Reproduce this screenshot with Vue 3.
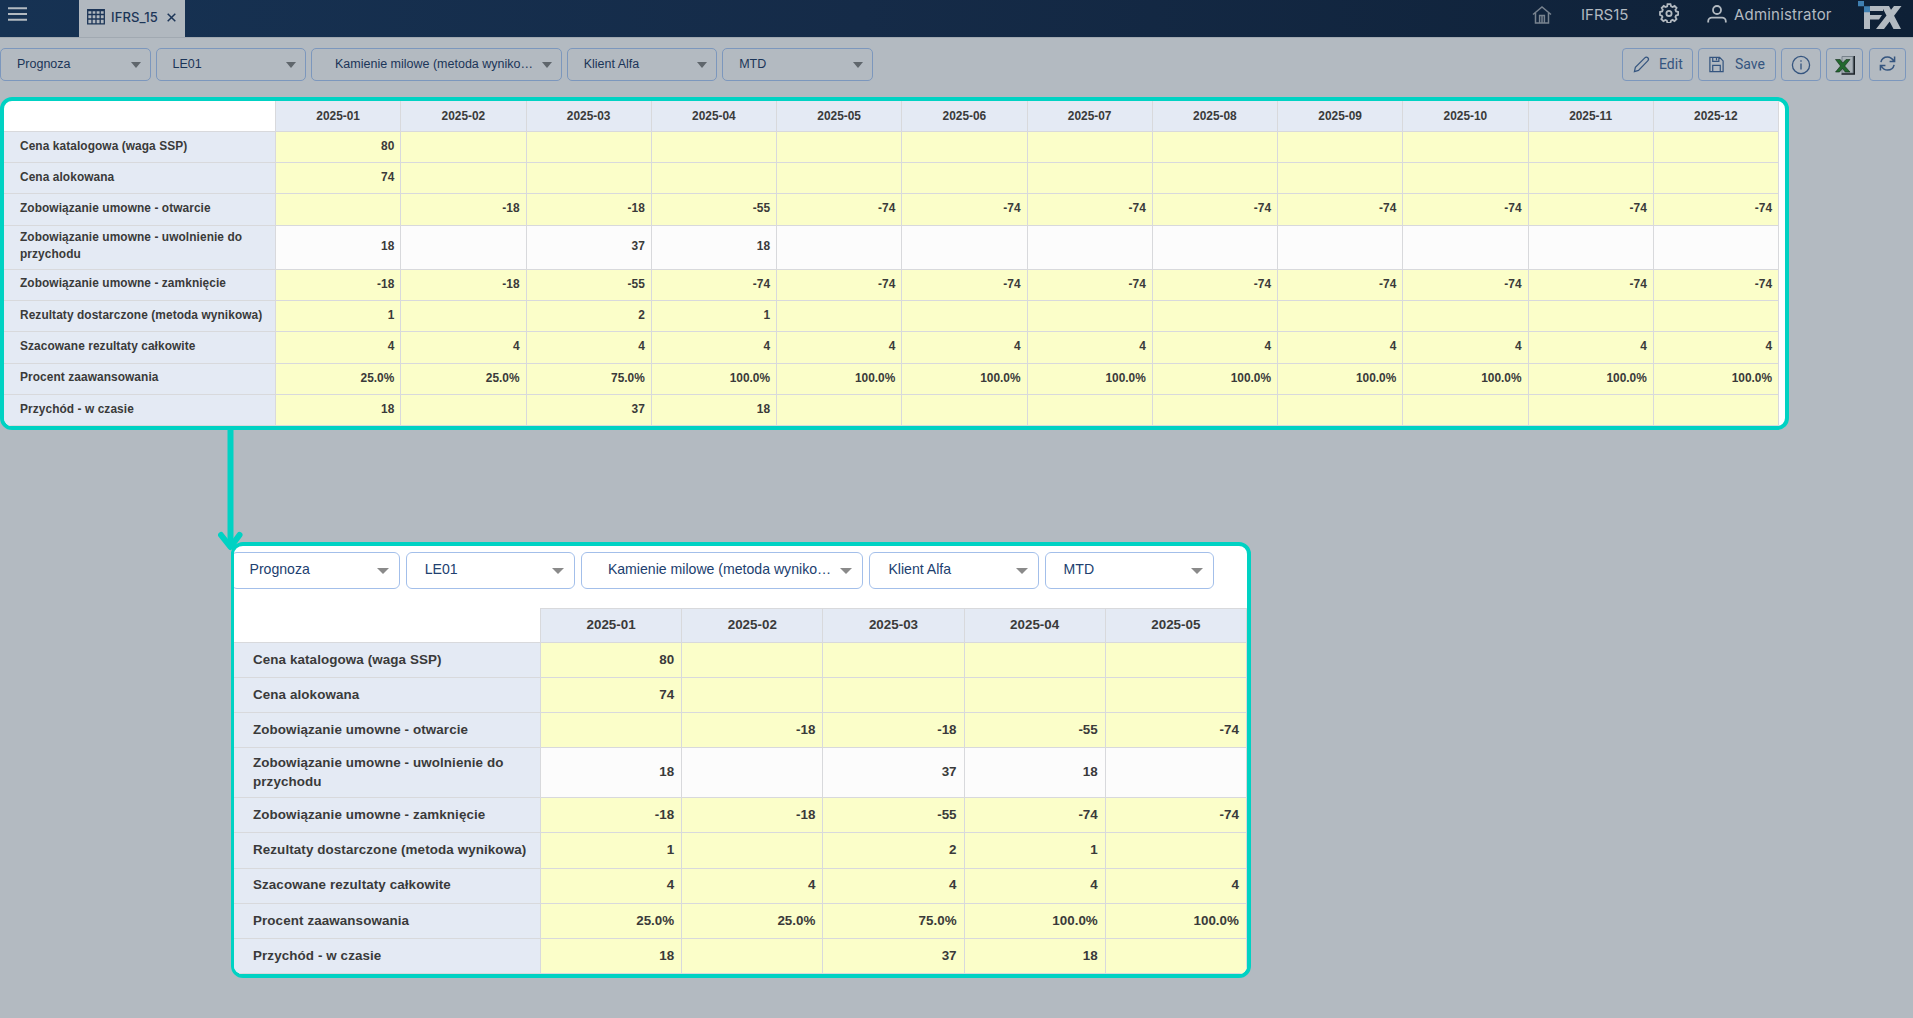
<script setup>
const months = Array.from({ length: 12 }, (_, i) => `2025-${String(i + 1).padStart(2, '0')}`)

const fill = (head, rest) => [...head, ...Array(12 - head.length).fill(rest)]

const rows = [
  { label: 'Cena katalogowa (waga SSP)', values: fill(['80'], '') },
  { label: 'Cena alokowana', values: fill(['74'], '') },
  { label: 'Zobowiązanie umowne - otwarcie', values: fill(['', '-18', '-18', '-55'], '-74') },
  { label: 'Zobowiązanie umowne - uwolnienie do przychodu', values: fill(['18', '', '37', '18'], ''), input: true },
  { label: 'Zobowiązanie umowne - zamknięcie', values: fill(['-18', '-18', '-55'], '-74') },
  { label: 'Rezultaty dostarczone (metoda wynikowa)', values: fill(['1', '', '2', '1'], '') },
  { label: 'Szacowane rezultaty całkowite', values: fill([], '4') },
  { label: 'Procent zaawansowania', values: fill(['25.0%', '25.0%', '75.0%'], '100.0%') },
  { label: 'Przychód - w czasie', values: fill(['18', '', '37', '18'], '') }
]

const filters = [
  { text: 'Prognoza' },
  { text: 'LE01' },
  { text: 'Kamienie milowe (metoda wyniko…', wide: true },
  { text: 'Klient Alfa' },
  { text: 'MTD' }
]

const tables = [
  { name: 'full', months },
  { name: 'zoomed', months: months.slice(0, 5), filters }
]
</script>

<template>
  <div class="page">
    <header class="topbar">
      <svg class="burger" viewBox="0 0 19 14"><path d="M0 1.2h19M0 7h19M0 12.8h19" /></svg>
      <div class="tab">
        <svg class="tab-grid" viewBox="0 0 18 16">
          <path d="M.7 .7h16.6v14.2H.7zM.7 1.5h16.6M.7 5.5h16.6M.7 10h16.6M5 .7v14.2M9 .7v14.2M13.2 .7v14.2" />
        </svg>
        <span class="tab-name">IFRS_15</span>
        <svg class="tab-close" viewBox="0 0 9 9"><path d="M.7 .7l7.6 7.6M8.3 .7L.7 8.3" /></svg>
      </div>
      <div class="account">
        <svg class="home" viewBox="0 0 20 18">
          <path d="M1 8.5L10 1l9 7.5M3.5 7v10h13V7M7.6 17V9.5h4.8V17M10 10v7" />
        </svg>
        <span class="module">IFRS15</span>
        <svg class="gear" viewBox="0 0 20 20">
          <path d="M8.5 1.2h3l.6 2.2 1.5.7 2-1.2 2 2-1.2 2 .7 1.5 2.1.6v2.9l-2.2.7-.6 1.4 1.1 2-2 2.1-2-1.2-1.4.7-.7 2.2h-3l-.6-2.2-1.4-.6-2 1.1-2.1-2.1 1.2-2-.7-1.4L1 11.9V9l2.2-.6.6-1.5-1.1-2 2-2 2 1.2 1.5-.7z" />
          <circle cx="10" cy="10.4" r="2.6" />
        </svg>
        <svg class="user" viewBox="0 0 20 18">
          <circle cx="10" cy="5" r="4" />
          <path d="M1.2 17.5v-1.2c0-2 1.6-3.7 3.7-3.7h10.2c2 0 3.7 1.7 3.7 3.7v1.2" />
        </svg>
        <span class="user-name">Administrator</span>
        <svg class="logo" viewBox="0 0 44 30">
          <path class="logo-letter" d="M12 6h13v5H12v4h12l-3 4.5h-9V29H6V12h6z" />
          <path class="logo-letter" d="M23.5 6H31l12 23h-7.5zM36 6h7.5L26 29h-8z" />
          <path class="logo-square" d="M0 1h6v5.2H0zM6 6.2h6v6H6z" />
        </svg>
      </div>
    </header>

    <div class="toolbar">
      <div class="filters">
        <div v-for="f in filters" :key="f.text" class="select" :class="{ wide: f.wide }">
          <span>{{ f.text }}</span><i class="caret"></i>
        </div>
      </div>
      <div class="actions">
        <button class="btn edit">
          <svg viewBox="0 0 18 18"><path d="M1.5 16.5l1-4.5L12.5 2c1-1 2.3-1 3.2-.1s.9 2.2-.1 3.2L5.8 15.3z" /></svg>
          <span>Edit</span>
        </button>
        <button class="btn save">
          <svg viewBox="0 0 18 18"><path d="M2 1.5h10.3l3.7 3.7v11.3H2zM5 1.5v4.3h6.5V1.5M9 2v2.5M5 16.5V10h8v6.5" /></svg>
          <span>Save</span>
        </button>
        <button class="btn info">
          <svg viewBox="0 0 20 20"><circle cx="10" cy="10" r="8.6" /><path d="M10 8.5v6M10 5.3v1.5" /></svg>
        </button>
        <button class="btn excel">
          <svg viewBox="0 0 20 20">
            <path class="sheet" d="M7 1.5h11v16.5H7z" />
            <path class="sheet-edge" d="M6.5 19h12.7V1" />
            <path class="x-mark" d="M.5 4.5h4.7L7.7 8 11 4.5h4L9.700 11l5.300 6h-4.800l-2.700-3.500-3 3.500h-4l5-6z" />
          </svg>
        </button>
        <button class="btn refresh">
          <svg viewBox="0 0 18 18">
            <path d="M2 7.5C2.8 4 5.6 2 9 2c3 0 5 1.5 6.8 4.5M16.5 1.5v5.3h-5.3M16 10.5C15.2 14 12.4 16 9 16c-3 0-5-1.5-6.8-4.5M1.5 16.5v-5.3h5.3" />
          </svg>
        </button>
      </div>
    </div>

    <section v-for="t in tables" :key="t.name" class="panel" :class="t.name">
      <div v-if="t.filters" class="filters">
        <div v-for="f in t.filters" :key="f.text" class="select" :class="{ wide: f.wide }">
          <span>{{ f.text }}</span><i class="caret"></i>
        </div>
      </div>
      <div class="grid">
        <div class="corner"></div>
        <div v-for="m in t.months" :key="m" class="month">{{ m }}</div>
        <template v-for="r in rows" :key="r.label">
          <div class="label"><span>{{ r.label }}</span></div>
          <div v-for="(m, i) in t.months" :key="m" class="cell" :class="{ input: r.input }">{{ r.values[i] }}</div>
        </template>
      </div>
    </section>

    <!-- arrow from the full table to its enlarged fragment -->
    <svg class="arrow" viewBox="0 0 26 122">
      <path class="shaft" d="M12.5 0v116" />
      <path class="head" d="M3 106l9.5 12 9-12" />
    </svg>
  </div>
</template>

<style>
body {
  margin: 0;
  background: #b3bac1;
}
</style>

<style scoped>
.page {
  position: relative;
  width: 1913px;
  height: 1018px;
  overflow: hidden;
  background: #b3bac1;
  font-family: 'Liberation Sans', Arial, sans-serif;
}

.page * {
  box-sizing: border-box;
}

svg {
  display: block;
  flex: none;
  fill: none;
  stroke: currentColor;
}

/* top bar */
.topbar {
  display: flex;
  height: 37px;
  background: linear-gradient(90deg, #163253 0%, #152b48 45%, #0e2036 100%);
  color: #b3bac1;
  font-family: Inter, sans-serif;
}

.burger {
  width: 19px;
  height: 14px;
  margin: 7px 52px 0 8px;
  stroke-width: 2;
}

.tab {
  display: flex;
  width: 106px;
  padding-left: 8px;
  background: #b1b8bf;
  color: #1c3557;
}

.tab-grid {
  width: 18px;
  height: 16px;
  margin-top: 9px;
  stroke-width: 1.3;
}

.tab-name {
  width: 62px;
  padding-left: 6px;
  font: 500 13px/35px Inter, sans-serif;
  letter-spacing: 0.1px;
}

.tab-close {
  width: 9px;
  height: 9px;
  margin-top: 13px;
  stroke-width: 1.5;
}

.account {
  display: flex;
  margin-left: auto;
}

.home {
  width: 20px;
  height: 18px;
  margin: 6px 29px 0 0;
  color: #78838f;
  stroke-width: 1.5;
}

.module {
  width: 78px;
  font-size: 15px;
  line-height: 30px;
}

.gear {
  width: 20px;
  height: 20px;
  margin: 3px 28px 0 0;
  stroke-width: 1.8;
}

.user {
  width: 20px;
  height: 18px;
  margin: 5px 7px 0 0;
  stroke-width: 1.8;
}

.user-name {
  width: 124px;
  font-size: 15px;
  line-height: 30px;
  letter-spacing: 0.2px;
}

.logo {
  width: 44px;
  height: 30px;
  margin-right: 11px;
  stroke: none;
}

.logo-letter {
  fill: #b3bac1;
}

.logo-square {
  fill: #3f7fb0;
}

/* filters and actions */
.toolbar {
  display: flex;
  justify-content: space-between;
  height: 60px;
  padding: 10px 7px 0 0;
  border-top: 1px solid #a1a9b1;
}

.filters {
  display: flex;
  gap: 5px;
}

.select {
  display: flex;
  align-items: center;
  justify-content: space-between;
  width: 150.5px;
  height: 33px;
  padding: 0 9px 2px 16px;
  border: 1px solid #7c97bd;
  border-radius: 5px;
  color: #1b3558;
  font-size: 12.5px;
  white-space: nowrap;
}

.select.wide {
  width: 250.7px;
  padding-left: 23px;
}

.caret {
  margin-top: 3px;
  border: 5px solid transparent;
  border-top: 6px solid #5f666c;
  border-bottom: 0;
}

.actions {
  display: flex;
  gap: 5px;
}

.btn {
  display: flex;
  align-items: center;
  height: 33px;
  padding: 0;
  border: 1px solid #7c97bd;
  border-radius: 4px;
  background: none;
  color: #35557f;
  font: 14px/1 Roboto, sans-serif;
}

.btn svg {
  width: 17px;
  height: 17px;
  stroke-width: 1.3;
}

.btn span {
  padding-bottom: 1px;
}

.edit {
  width: 71px;
  padding-left: 10px;
  gap: 9px;
}

.save {
  width: 78px;
  padding-left: 9px;
  gap: 10px;
}

.info,
.excel,
.refresh {
  justify-content: center;
  width: 37px;
}

.info {
  width: 40px;
}

.btn.info svg,
.btn.excel svg {
  width: 20px;
  height: 20px;
}

.btn.refresh {
  margin-left: 1px;
  padding-bottom: 3px;
}

.btn.refresh svg {
  stroke-width: 1.6;
}

.sheet {
  fill: #aab2b8;
  stroke: #77818a;
  stroke-width: 1;
}

.sheet-edge {
  stroke: #1c2329;
  stroke-width: 1.6;
}

.x-mark {
  fill: #23692f;
  stroke: #122e1b;
  stroke-width: 0.6;
}

/* highlighted panels */
.panel {
  overflow: hidden;
  border: 4px solid #00d2c3;
  border-radius: 12px;
  background: #fff;
}

.full {
  width: 1789px;
  height: 333px;
}

.zoomed {
  width: 1020px;
  height: 436px;
  margin: 112px 0 0 231px;
  border-left-width: 3px;
}

.zoomed .filters {
  gap: 6px;
  margin: 6px 0 19px -3.5px;
}

.zoomed .select {
  flex: none;
  width: 169.2px;
  height: 37px;
  padding: 0 10px 3px 18px;
  border-color: #a3bfea;
  border-radius: 6px;
  color: #21406f;
  font-size: 14.1px;
}

.zoomed .select.wide {
  width: 282.5px;
  padding-left: 26px;
}

.zoomed .caret {
  border-width: 6px 6px 0;
  border-top-color: #8a8a8a;
}

.grid {
  display: grid;
  color: #3a3a3a;
  font-weight: bold;
}

.full .grid {
  grid-template-columns: 272px repeat(12, 125.25px);
  grid-template-rows: 31px 31.2px 31.2px 31.2px 44px repeat(5, 31.35px);
  font-size: 11.9px;
}

.zoomed .grid {
  grid-template-columns: 307px repeat(5, 141.2px);
  grid-template-rows: 35px 35px 35px 35.3px 49.7px repeat(5, 35.3px);
  font-size: 13.4px;
}

.grid > div {
  display: flex;
  align-items: center;
  border-right: 1px solid #d8d9dc;
  border-bottom: 1px solid #d8d9dc;
}

.month {
  justify-content: center;
  background: #e4eaf4;
}

.zoomed .month {
  padding-bottom: 2px;
  border-top: 1px solid #d8d9dc;
}

.label {
  padding: 0 4px 2px 16px;
  background: #e4eaf4;
  line-height: 17px;
  letter-spacing: 0.08px;
}

.zoomed .label {
  padding-left: 19px;
  line-height: 19px;
  letter-spacing: 0.1px;
}

.cell {
  justify-content: flex-end;
  padding: 0 6px 2px 0;
  background: #fbfec9;
}

.zoomed .cell {
  padding-right: 7px;
}

.cell.input {
  background: #fcfcfc;
}

.arrow {
  position: absolute;
  top: 429px;
  left: 218px;
  width: 26px;
  height: 122px;
  color: #00d2c3;
}

.shaft {
  stroke-width: 6;
}

.head {
  stroke-width: 6;
  stroke-linecap: round;
  stroke-linejoin: round;
}
</style>
